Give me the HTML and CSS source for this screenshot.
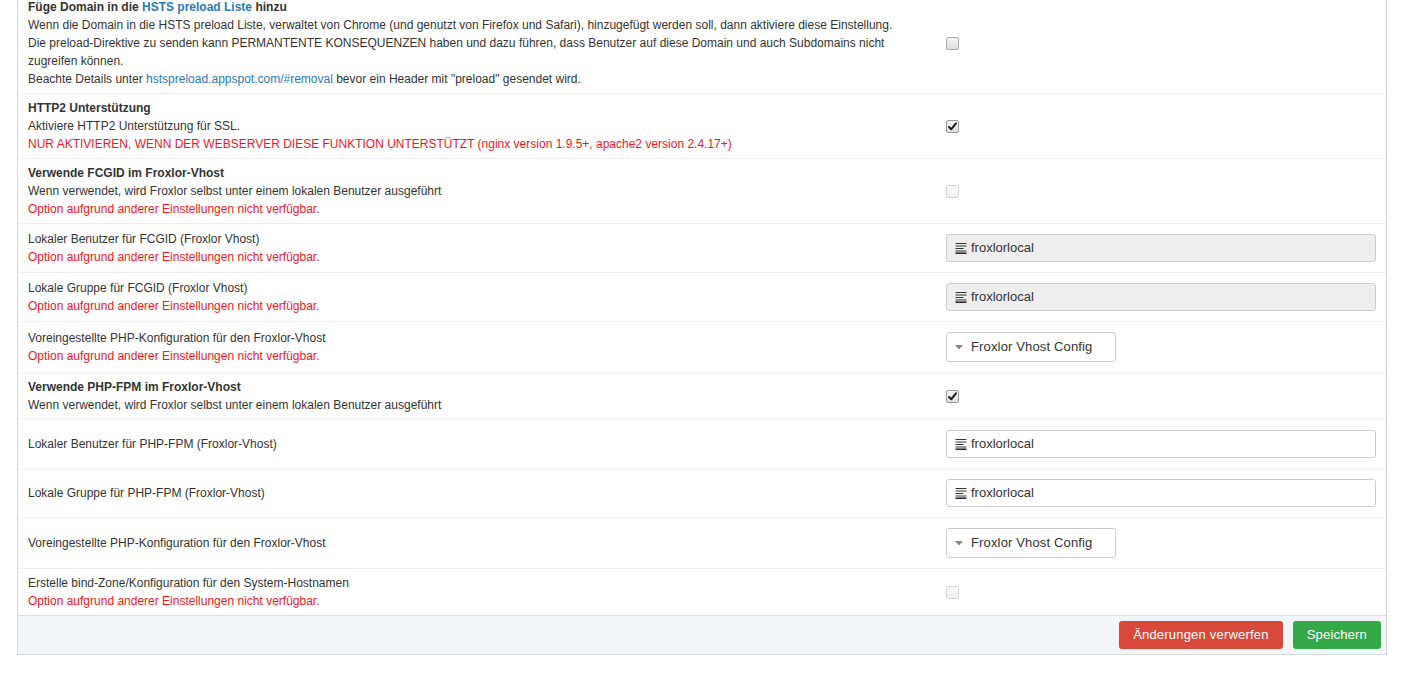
FILE: index.html
```html
<!DOCTYPE html>
<html lang="de">
<head>
<meta charset="utf-8">
<title>Einstellungen</title>
<link rel="stylesheet" href="styles.css">
</head>
<body>
<div class="page">
  <div class="panel">
    <div class="row">
      <div class="label">
        <div class="title">Füge Domain in die <a href="#" class="link">HSTS preload Liste</a> hinzu</div>
        <div>Wenn die Domain in die HSTS preload Liste, verwaltet von Chrome (und genutzt von Firefox und Safari), hinzugefügt werden soll, dann aktiviere diese Einstellung.</div>
        <div>Die preload-Direktive zu senden kann PERMANTENTE KONSEQUENZEN haben und dazu führen, dass Benutzer auf diese Domain und auch Subdomains nicht<br>zugreifen können.</div>
        <div>Beachte Details unter <a href="#" class="link plain">hstspreload.appspot.com/#removal</a> bevor ein Header mit "preload" gesendet wird.</div>
      </div>
      <div class="field"><span class="cb"></span></div>
    </div>

    <div class="row">
      <div class="label">
        <div class="title">HTTP2 Unterstützung</div>
        <div>Aktiviere HTTP2 Unterstützung für SSL.</div>
        <div class="warn">NUR AKTIVIEREN, WENN DER WEBSERVER DIESE FUNKTION UNTERSTÜTZT (nginx version 1.9.5+, apache2 version 2.4.17+)</div>
      </div>
      <div class="field"><span class="cb checked"><svg viewBox="0 0 12 12" width="11" height="11"><path d="M2.2 6.6 L4.6 9 L9.8 2.6" fill="none" stroke="#222" stroke-width="2.2" stroke-linecap="round" stroke-linejoin="round"/></svg></span></div>
    </div>

    <div class="row">
      <div class="label">
        <div class="title">Verwende FCGID im Froxlor-Vhost</div>
        <div>Wenn verwendet, wird Froxlor selbst unter einem lokalen Benutzer ausgeführt</div>
        <div class="warn">Option aufgrund anderer Einstellungen nicht verfügbar.</div>
      </div>
      <div class="field"><span class="cb disabled"></span></div>
    </div>

    <div class="row">
      <div class="label">
        <div>Lokaler Benutzer für FCGID (Froxlor Vhost)</div>
        <div class="warn">Option aufgrund anderer Einstellungen nicht verfügbar.</div>
      </div>
      <div class="field"><div class="input disabled"><svg class="ico" viewBox="0 0 12 12" width="12" height="12"><path d="M0.5 1.5h11M0.5 4h11M0.5 6.5h8M0.5 9h11" stroke="#333" stroke-width="1" fill="none"/><path d="M0.5 11.2h11" stroke="#111" stroke-width="1.4"/></svg><span>froxlorlocal</span></div></div>
    </div>

    <div class="row">
      <div class="label">
        <div>Lokale Gruppe für FCGID (Froxlor Vhost)</div>
        <div class="warn">Option aufgrund anderer Einstellungen nicht verfügbar.</div>
      </div>
      <div class="field"><div class="input disabled"><svg class="ico" viewBox="0 0 12 12" width="12" height="12"><path d="M0.5 1.5h11M0.5 4h11M0.5 6.5h8M0.5 9h11" stroke="#333" stroke-width="1" fill="none"/><path d="M0.5 11.2h11" stroke="#111" stroke-width="1.4"/></svg><span>froxlorlocal</span></div></div>
    </div>

    <div class="row">
      <div class="label">
        <div>Voreingestellte PHP-Konfiguration für den Froxlor-Vhost</div>
        <div class="warn">Option aufgrund anderer Einstellungen nicht verfügbar.</div>
      </div>
      <div class="field"><div class="select"><svg class="caret" viewBox="0 0 8 5" width="8" height="5"><path d="M0 0h8L4 4.5z" fill="#888"/></svg><span>Froxlor Vhost Config</span></div></div>
    </div>

    <div class="row">
      <div class="label">
        <div class="title">Verwende PHP-FPM im Froxlor-Vhost</div>
        <div>Wenn verwendet, wird Froxlor selbst unter einem lokalen Benutzer ausgeführt</div>
      </div>
      <div class="field"><span class="cb checked"><svg viewBox="0 0 12 12" width="11" height="11"><path d="M2.2 6.6 L4.6 9 L9.8 2.6" fill="none" stroke="#222" stroke-width="2.2" stroke-linecap="round" stroke-linejoin="round"/></svg></span></div>
    </div>

    <div class="row">
      <div class="label">
        <div>Lokaler Benutzer für PHP-FPM (Froxlor-Vhost)</div>
      </div>
      <div class="field"><div class="input"><svg class="ico" viewBox="0 0 12 12" width="12" height="12"><path d="M0.5 1.5h11M0.5 4h11M0.5 6.5h8M0.5 9h11" stroke="#333" stroke-width="1" fill="none"/><path d="M0.5 11.2h11" stroke="#111" stroke-width="1.4"/></svg><span>froxlorlocal</span></div></div>
    </div>

    <div class="row">
      <div class="label">
        <div>Lokale Gruppe für PHP-FPM (Froxlor-Vhost)</div>
      </div>
      <div class="field"><div class="input"><svg class="ico" viewBox="0 0 12 12" width="12" height="12"><path d="M0.5 1.5h11M0.5 4h11M0.5 6.5h8M0.5 9h11" stroke="#333" stroke-width="1" fill="none"/><path d="M0.5 11.2h11" stroke="#111" stroke-width="1.4"/></svg><span>froxlorlocal</span></div></div>
    </div>

    <div class="row">
      <div class="label">
        <div>Voreingestellte PHP-Konfiguration für den Froxlor-Vhost</div>
      </div>
      <div class="field"><div class="select"><svg class="caret" viewBox="0 0 8 5" width="8" height="5"><path d="M0 0h8L4 4.5z" fill="#888"/></svg><span>Froxlor Vhost Config</span></div></div>
    </div>

    <div class="row">
      <div class="label">
        <div>Erstelle bind-Zone/Konfiguration für den System-Hostnamen</div>
        <div class="warn">Option aufgrund anderer Einstellungen nicht verfügbar.</div>
      </div>
      <div class="field"><span class="cb disabled"></span></div>
    </div>

    <div class="footer">
      <button class="btn btn-danger" type="button">Änderungen verwerfen</button>
      <button class="btn btn-success" type="button">Speichern</button>
    </div>
  </div>
</div>
</body>
</html>
```

FILE: styles.css
```css
html, body {
  margin: 0;
  padding: 0;
  background: #fff;
}

body {
  font-family: "Liberation Sans", Arial, sans-serif;
  font-size: 12px;
  line-height: 18px;
  color: #333;
}

.page {
  padding: 0 19px 0 17px;
  margin-top: -8px;
}

.panel {
  border: 1px solid #d8dbde;
  border-right-color: #cfd2d5;
}

.row {
  display: grid;
  grid-template-columns: 918px 1fr;
  border-top: 1px solid #eceeef;
}

.row:first-child {
  border-top: 0;
}

.label {
  padding: 5px 10px;
  align-self: center;
}

.title {
  font-weight: bold;
}

.link {
  color: #2a7ab8;
  text-decoration: none;
}

.warn {
  color: #f5141e;
}

.field {
  padding: 5px 10px;
  display: flex;
  align-items: center;
}

.cb {
  width: 11px;
  height: 11px;
  border: 1px solid #a9a9a9;
  border-radius: 2px;
  background: linear-gradient(#f4f4f4, #dedede);
  display: flex;
  align-items: center;
  justify-content: center;
}

.cb.checked {
  border-color: #9a9a9a;
}

.cb.disabled {
  border-color: #d4d4d4;
  background: linear-gradient(#fafafa, #efefef);
}

.input {
  flex: 1;
  height: 26px;
  margin: 5px 0;
  border: 1px solid #ccc;
  border-radius: 3px;
  background: #fff;
  display: flex;
  align-items: center;
  padding: 0 8px;
  font-size: 13px;
  color: #333;
}

.input.disabled {
  background: #eee;
}

.ico {
  margin-right: 4px;
  flex: none;
}

.select {
  width: 152px;
  height: 28px;
  margin: 5px 0;
  border: 1px solid #ccc;
  border-radius: 3px;
  background: #fff;
  display: flex;
  align-items: center;
  padding: 0 8px;
  font-size: 13px;
  color: #333;
}

.select span {
  letter-spacing: 0.15px;
}

.caret {
  margin-right: 8px;
  flex: none;
}

.footer {
  border-top: 1px solid #dadde0;
  background: #f2f6f9;
  padding: 5px;
  display: flex;
  justify-content: flex-end;
  gap: 10px;
}

.btn {
  font-family: "Liberation Sans", Arial, sans-serif;
  font-size: 13px;
  line-height: 18px;
  height: 28px;
  padding: 0 14px;
  border: 0;
  border-radius: 3px;
  color: #fff;
  letter-spacing: 0.2px;
}

.btn-danger {
  background: #d9493a;
}

.btn-success {
  background: #34a94a;
}
```
